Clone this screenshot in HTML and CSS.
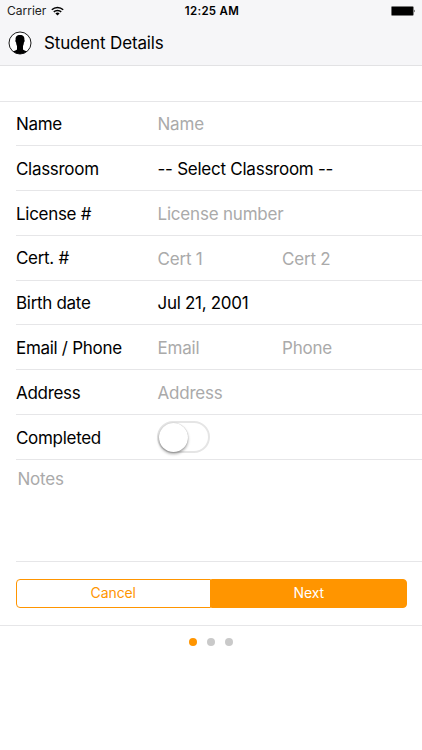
FILE: index.html
```html
<!DOCTYPE html>
<html lang="en">
<head>
  <meta charset="UTF-8">
  <meta name="viewport" content="width=device-width, initial-scale=1.0">
  <title>Student Details</title>
  <link rel="stylesheet" href="styles.css">
</head>
<body>
  <header>
    <div class="status-bar">
      <div class="carrier">
        <span>Carrier</span>
        <svg class="wifi" viewBox="0 0 13 10" width="13" height="10">
          <path d="M0.8 3.7a8.2 8.2 0 0 1 11.4 0M2.8 5.9a5.3 5.3 0 0 1 7.4 0" fill="none" stroke="#000" stroke-width="1.5"/>
          <path d="M4.4 7.5a3 3 0 0 1 4.2 0L6.5 9.6z"/>
        </svg>
      </div>
      <div class="time">12:25 AM</div>
      <svg class="battery" viewBox="0 0 25 10" width="25" height="10">
        <rect x="0.4" y="0.4" width="22" height="9.2" rx="1" stroke="#777" stroke-width="0.6"/>
        <path d="M23.3 3.5q1.4 1.5 0 3z"/>
      </svg>
    </div>
    <div class="nav-bar">
      <svg class="avatar" viewBox="0 0 24 24" width="24" height="24">
        <circle cx="12" cy="12" r="11" fill="#fff" stroke="#000" stroke-width="0.9"/>
        <path d="M12 4c-3.400 0-4.600 1.900-4.400 4.700-.6.600-.1 2.500.5 2.900.1 1.500.4 2.500.9 3.300v3.700c-.6 1-2.500 1.100-4 2A11 11 0 0 0 12 23a11 11 0 0 0 7-2.400c-1.500-.9-3.400-1-4-2v-3.700c.5-.8.8-1.800.9-3.300.6-.4 1.100-2.300.5-2.900.2-2.800-1-4.700-4.400-4.700z"/>
      </svg>
      <h1>Student Details</h1>
    </div>
  </header>
  <main>
    <div class="spacer"></div>
    <div class="form">
      <div class="row"><span class="label">Name</span><span class="field empty">Name</span></div>
      <div class="row"><span class="label">Classroom</span><span class="field select">-- Select Classroom --</span></div>
      <div class="row"><span class="label">License #</span><span class="field empty">License number</span></div>
      <div class="row"><span class="label">Cert. #</span><span class="field empty">Cert 1</span><span class="field empty">Cert 2</span></div>
      <div class="row"><span class="label">Birth date</span><span class="field">Jul 21, 2001</span></div>
      <div class="row"><span class="label">Email / Phone</span><span class="field empty">Email</span><span class="field empty">Phone</span></div>
      <div class="row"><span class="label">Address</span><span class="field empty">Address</span></div>
      <div class="row"><span class="label">Completed</span><span class="switch"><span class="knob"></span></span></div>
      <div class="notes empty">Notes</div>
    </div>
    <div class="buttons">
      <button class="cancel">Cancel</button>
      <button class="next">Next</button>
    </div>
  </main>
  <div class="pager">
    <span class="dot active"></span>
    <span class="dot"></span>
    <span class="dot"></span>
  </div>
</body>
</html>
```
FILE: styles.css
```css
* { box-sizing: border-box; }
body {
  margin: 0;
  min-height: 100vh;
  background: #fff;
  color: #000;
  font-family: Inter, Roboto, sans-serif;
  font-size: 17px;
}
header {
  height: 66px;
  background: #f6f6f8;
  border-bottom: 1px solid #e2e2e4;
}
.status-bar {
  height: 22px;
  padding: 0 6px 0 7px;
  display: grid;
  grid-template-columns: 1fr auto 1fr;
  align-items: center;
  font-size: 12px;
}
.carrier { display: flex; align-items: center; gap: 5px; color: #222; }
.carrier span { padding-bottom: 1px; }
.time { font-weight: 600; font-size: 11.5px; letter-spacing: 0.3px; padding-left: 1px; }
.battery { justify-self: end; }
.nav-bar {
  height: 42px;
  padding-left: 8px;
  display: flex;
  align-items: center;
  gap: 12px;
}
h1 {
  margin: 0;
  font-size: 17px;
  font-weight: 400;
  letter-spacing: -0.15px;
}
.spacer {
  height: 35.5px;
  border-bottom: 1px solid #e6e6e8;
}
.form { padding-left: 16px; letter-spacing: -0.3px; }
.row {
  height: 44.8px;
  display: flex;
  align-items: center;
  border-bottom: 1px solid #e6e6e8;
}
.label { width: 141.5px; padding-top: 1.2px; }
.field { width: 124.5px; padding-top: 1.6px; white-space: nowrap; }
.select { letter-spacing: -0.25px; }
.empty { color: #aaa; letter-spacing: -0.2px; }
.switch {
  width: 53px;
  height: 32px;
  margin-left: -0.5px;
  border: 2px solid #e5e5e5;
  border-radius: 16px;
}
.knob {
  display: block;
  width: 29px;
  height: 29px;
  margin-left: -0.5px;
  border-radius: 50%;
  background: #fff;
  box-shadow: 0 2px 3px rgba(0,0,0,0.35), 0 0 1px rgba(0,0,0,0.3);
}
.notes {
  height: 102px;
  padding: 9px 1.5px;
  border-bottom: 1px solid #e6e6e8;
}
.buttons {
  height: 64px;
  padding: 17px 15.5px;
  display: flex;
  border-bottom: 1px solid #e6e6e8;
}
.buttons button {
  flex: 1;
  padding: 0 0 2px;
  border: 1px solid #ff9500;
  font-family: inherit;
  font-size: 14px;
  letter-spacing: -0.1px;
}
.cancel { background: #fff; color: #ff9500; border-radius: 4px 0 0 4px; }
.next { background: #ff9500; color: #fff; border-radius: 0 4px 4px 0; }
.pager {
  display: flex;
  justify-content: center;
  gap: 10px;
  padding-top: 12px;
}
.dot {
  width: 8px;
  height: 8px;
  border-radius: 50%;
  background: #c9c9c9;
}
.dot.active { background: #ff9500; }
```
